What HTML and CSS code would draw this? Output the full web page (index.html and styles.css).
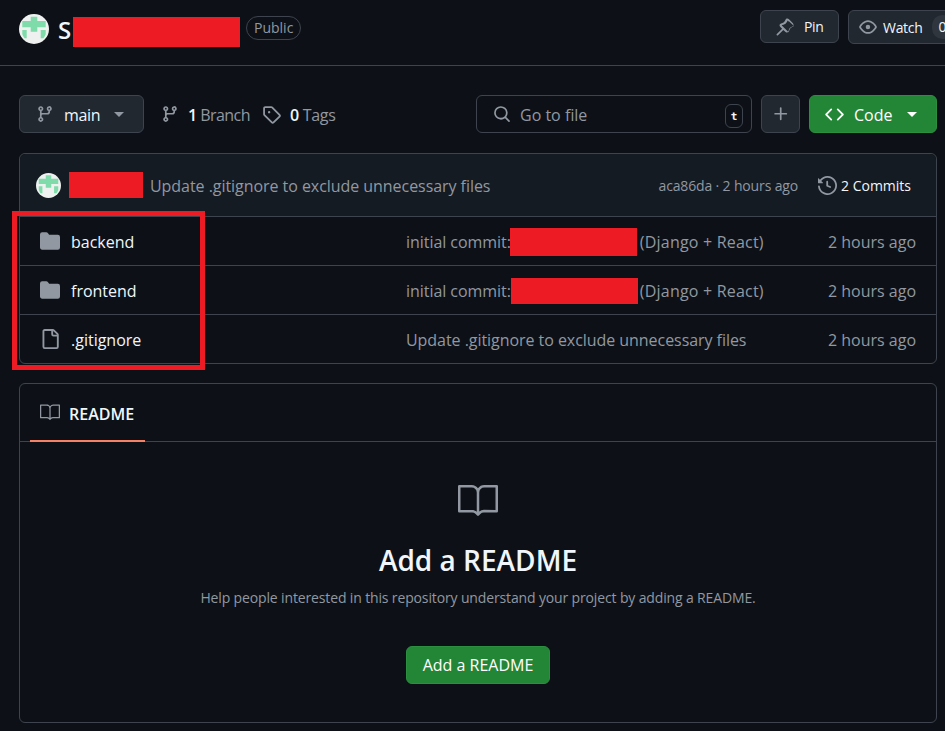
FILE: index.html
```html
<!DOCTYPE html>
<html lang="en">
<head>
<meta charset="utf-8">
<title>Repository</title>
<link rel="stylesheet" href="styles.css">
</head>
<body>
<svg width="0" height="0" class="defs">
  <defs>
    <symbol id="branch" viewBox="0 0 16 16"><path fill="currentColor" d="M9.5 3.25a2.25 2.25 0 1 1 3 2.122V6A2.5 2.5 0 0 1 10 8.5H6a1 1 0 0 0-1 1v1.128a2.251 2.251 0 1 1-1.5 0V5.372a2.25 2.25 0 1 1 1.5 0v1.836A2.493 2.493 0 0 1 6 7h4a1 1 0 0 0 1-1v-.628A2.25 2.25 0 0 1 9.5 3.25Zm-6 0a.75.75 0 1 0 1.5 0 .75.75 0 0 0-1.5 0Zm8.25-.75a.75.75 0 1 0 0 1.5.75.75 0 0 0 0-1.5ZM4.25 12a.75.75 0 1 0 0 1.5.75.75 0 0 0 0-1.5Z"/></symbol>
    <symbol id="book" viewBox="0 0 24 24"><path fill="currentColor" d="M0 3.75A.75.75 0 0 1 .75 3h7.497c1.566 0 2.945.8 3.751 2.014A4.495 4.495 0 0 1 15.750 3h7.500a.75.75 0 0 1 .75.75v15.063a.752.752 0 0 1-.755.75l-7.682-.052a3 3 0 0 0-2.142.878l-.89.891a.75.75 0 0 1-1.061 0l-.902-.901a2.996 2.996 0 0 0-2.121-.879H.75a.75.75 0 0 1-.75-.75Zm12.750 15.144a4.496 4.496 0 0 1 2.823-.971l6.927.047V4.500h-6.750a3 3 0 0 0-3 3ZM11.247 7.497a3 3 0 0 0-3-2.997H1.500V18h6.947c1.018 0 2.006.346 2.803.98Z"/></symbol>
    <symbol id="folder" viewBox="0 0 16 16"><path fill="currentColor" d="M1.75 1A1.75 1.75 0 0 0 0 2.75v10.5C0 14.216.784 15 1.75 15h12.500A1.75 1.75 0 0 0 16 13.250v-8.500A1.75 1.75 0 0 0 14.250 3H7.500a.25.25 0 0 1-.2-.1l-.9-1.200C6.070 1.260 5.550 1 5 1H1.750Z"/></symbol>
    <symbol id="file" viewBox="0 0 16 16"><path fill="currentColor" d="M2 1.75C2 .784 2.784 0 3.75 0h6.586c.464 0 .909.184 1.237.513l2.914 2.914c.329.328.513.773.513 1.237v9.586A1.75 1.75 0 0 1 13.250 16h-9.500A1.75 1.75 0 0 1 2 14.250Zm1.750-.25a.25.25 0 0 0-.25.25v12.500c0 .138.112.25.25.25h9.500a.25.25 0 0 0 .25-.25V6h-2.750A1.750 1.750 0 0 1 9 4.250V1.500Zm6.750.062V4.250c0 .138.112.25.25.25h2.688l-.011-.013-2.914-2.914-.013-.011Z"/></symbol>
    <symbol id="avatar" viewBox="0 0 30 30"><circle cx="15" cy="15" r="15" fill="#eef1ef"/><path fill="#7fdcaa" d="M11.700 2.700h6.600V7h8.400v6.300h-8.400v4.400h-6.600v-4.400H3.300V7h8.400Z"/><path fill="#7fdcaa" d="M3.300 16h4.400v8.300H5.500a14 14 0 0 1-2.200-4ZM21.700 16h5v4.300a14 14 0 0 1-2.200 4h-2.800Z"/></symbol>
  </defs>
</svg>

<header class="repo-head">
  <svg class="avatar-lg"><use href="#avatar"/></svg>
  <h1 class="repo-name">S<span class="redact redact-title"></span></h1>
  <span class="badge">Public</span>
  <div class="head-actions">
    <button class="btn btn-pin">
      <svg class="ic" viewBox="0 0 16 16"><path fill="currentColor" d="m11.294.984 3.722 3.722a1.75 1.75 0 0 1-.504 2.826l-1.327.613a3.089 3.089 0 0 0-1.707 2.084l-.302 1.289a1.75 1.750 0 0 1-2.945.813L6.5 10.56l-4.72 4.72a.749.749 0 1 1-1.060-1.060l4.720-4.720-1.772-1.771a1.750 1.750 0 0 1 .813-2.945l1.288-.302a3.089 3.089 0 0 0 2.084-1.707l.613-1.327a1.750 1.750 0 0 1 2.828-.504ZM10.335 2.120 9.722 3.447a4.587 4.587 0 0 1-3.095 2.537l-1.288.302a.25.25 0 0 0-.116.42l5.790 5.790a.25.25 0 0 0 .42-.116l.302-1.288a4.587 4.587 0 0 1 2.537-3.095l1.327-.613a.25.25 0 0 0 .072-.404l-3.722-3.722a.25.25 0 0 0-.404.072Z"/></svg>
      <span>Pin</span>
    </button>
    <button class="btn btn-watch">
      <svg class="ic" viewBox="0 0 16 16"><path fill="currentColor" d="M8 2c1.981 0 3.671.992 4.933 2.078 1.270 1.091 2.187 2.345 2.637 3.023a1.620 1.620 0 0 1 0 1.798c-.45.678-1.367 1.932-2.637 3.023C11.670 13.008 9.981 14 8 14s-3.671-.992-4.933-2.078C1.797 10.830.880 9.576.430 8.898a1.620 1.620 0 0 1 0-1.798c.45-.677 1.367-1.931 2.637-3.022C4.330 2.992 6.019 2 8 2ZM1.679 7.932a.12.12 0 0 0 0 .136c.411.622 1.241 1.750 2.366 2.717C5.176 11.758 6.527 12.500 8 12.500s2.825-.742 3.955-1.715c1.124-.967 1.954-2.096 2.366-2.717a.12.12 0 0 0 0-.136c-.412-.621-1.242-1.750-2.366-2.717C10.824 4.242 9.473 3.500 8 3.500s-2.825.742-3.955 1.715c-1.124.967-1.954 2.096-2.366 2.717ZM8 10a2 2 0 1 1-.001-3.999A2 2 0 0 1 8 10Z"/></svg>
      <span>Watch</span>
      <span class="count">0</span>
    </button>
  </div>
</header>

<main class="page">
  <div class="toolbar">
    <button class="btn btn-branch">
      <svg class="ic muted"><use href="#branch"/></svg>
      <span class="branch-name">main</span>
      <span class="caret caret-muted"></span>
    </button>
    <a class="stat stat-branch"><svg class="ic muted"><use href="#branch"/></svg><span><b>1</b> Branch</span></a>
    <a class="stat stat-tags">
      <svg class="ic muted" viewBox="0 0 16 16"><path fill="currentColor" d="M1 7.775V2.750C1 1.784 1.784 1 2.750 1h5.025c.464 0 .91.184 1.238.513l6.250 6.250a1.750 1.750 0 0 1 0 2.474l-5.026 5.026a1.750 1.750 0 0 1-2.474 0l-6.250-6.250A1.752 1.752 0 0 1 1 7.775Zm1.500 0c0 .066.026.130.073.177l6.250 6.250a.25.25 0 0 0 .354 0l5.025-5.025a.25.25 0 0 0 0-.354l-6.250-6.250a.25.25 0 0 0-.177-.073H2.750a.25.25 0 0 0-.25.25ZM6 5a1 1 0 1 1 0 2 1 1 0 0 1 0-2Z"/></svg>
      <span><b>0</b> Tags</span>
    </a>
    <div class="spacer"></div>
    <div class="search">
      <svg class="ic muted" viewBox="0 0 16 16"><path fill="currentColor" d="M10.680 11.740a6 6 0 0 1-7.922-8.982 6 6 0 0 1 8.982 7.922l3.040 3.040a.749.749 0 1 1-1.060 1.060ZM11.500 7a4.499 4.499 0 1 0-8.997 0A4.499 4.499 0 0 0 11.500 7Z"/></svg>
      <span class="search-text">Go to file</span>
      <kbd class="key">t</kbd>
    </div>
    <button class="btn btn-plus">
      <svg class="ic muted" viewBox="0 0 16 16"><path fill="currentColor" d="M7.750 2a.75.75 0 0 1 .75.75V7h4.250a.75.75 0 0 1 0 1.500H8.500v4.250a.75.75 0 0 1-1.500 0V8.500H2.750a.75.75 0 0 1 0-1.500H7V2.750A.75.75 0 0 1 7.750 2Z"/></svg>
    </button>
    <button class="btn btn-code">
      <svg class="ic" viewBox="0 0 16 16"><path fill="currentColor" d="m11.280 3.220 4.250 4.250a.75.75 0 0 1 0 1.060l-4.250 4.250a.749.749 0 1 1-1.060-1.060L13.940 8l-3.720-3.720a.749.749 0 1 1 1.060-1.060Zm-6.560 0a.751.751 0 0 1 1.060 1.060L2.060 8l3.720 3.720a.749.749 0 1 1-1.060 1.060L.470 8.530a.75.75 0 0 1 0-1.060Z"/></svg>
      <span>Code</span>
      <span class="caret"></span>
    </button>
  </div>

  <section class="files">
    <div class="commit-row">
      <svg class="avatar-sm"><use href="#avatar"/></svg>
      <span class="redact redact-user"></span>
      <span class="commit-msg">Update .gitignore to exclude unnecessary files</span>
      <span class="commit-meta">aca86da · 2 hours ago</span>
      <a class="commits">
        <svg class="ic muted" viewBox="0 0 16 16"><path fill="currentColor" d="m.427 1.927 1.215 1.215a8.002 8.002 0 1 1-1.600 5.685.75.75 0 1 1 1.493-.154 6.500 6.500 0 1 0 1.180-4.458l1.358 1.358A.25.25 0 0 1 3.896 6H.25A.25.25 0 0 1 0 5.750V2.104a.25.25 0 0 1 .427-.177ZM7.750 4a.75.75 0 0 1 .75.75v2.992l2.028.812a.75.75 0 0 1-.557 1.392l-2.500-1A.751.751 0 0 1 7 8.250v-3.500A.75.75 0 0 1 7.750 4Z"/></svg>
        <span>2 Commits</span>
      </a>
    </div>
    <div class="file-row">
      <svg class="ic muted file-ic"><use href="#folder"/></svg>
      <span class="file-name">backend</span>
      <span class="file-msg">initial commit:<span class="redact redact-a"></span><span class="msg-tail">(Django + React)</span></span>
      <span class="file-age">2 hours ago</span>
    </div>
    <div class="file-row">
      <svg class="ic muted file-ic"><use href="#folder"/></svg>
      <span class="file-name">frontend</span>
      <span class="file-msg">initial commit:<span class="redact redact-b"></span><span class="msg-tail">(Django + React)</span></span>
      <span class="file-age">2 hours ago</span>
    </div>
    <div class="file-row">
      <svg class="ic muted file-ic"><use href="#file"/></svg>
      <span class="file-name">.gitignore</span>
      <span class="file-msg">Update .gitignore to exclude unnecessary files</span>
      <span class="file-age">2 hours ago</span>
    </div>
  </section>

  <section class="readme">
    <div class="readme-tabs">
      <div class="readme-tab">
        <svg class="ic muted"><use href="#book"/></svg>
        <span>README</span>
      </div>
    </div>
    <div class="readme-body">
      <svg class="big-book muted"><use href="#book"/></svg>
      <h2 class="readme-title">Add a README</h2>
      <p class="readme-help">Help people interested in this repository understand your project by adding a README.</p>
      <button class="btn btn-add">Add a README</button>
    </div>
  </section>
</main>

<div class="highlight"></div>
</body>
</html>
```

FILE: styles.css
```css
* { box-sizing: border-box; }
html, body { margin: 0; height: 731px; overflow: hidden; }
body {
  position: relative;
  width: 945px;
  background: #0d1117;
  color: #f0f6fc;
  font-family: "Open Sans", "Noto Sans", sans-serif;
  font-size: 16px;
}
.defs { position: absolute; }
button { font: inherit; color: inherit; cursor: pointer; }
.ic { width: 18px; height: 18px; flex: none; display: block; }
.muted { color: #9198a1; }
.redact { display: inline-block; background: #ed1c24; flex: none; }

.btn {
  display: flex;
  align-items: center;
  margin: 0;
  padding: 0;
  background: #212830;
  border: 1px solid #3d444d;
  border-radius: 6px;
  white-space: nowrap;
}

.repo-head {
  display: flex;
  align-items: center;
  height: 66px;
  padding: 0 0 7px 19px;
  border-bottom: 1px solid #3d444d;
  white-space: nowrap;
}
.avatar-lg { width: 30px; height: 30px; flex: none; }
.repo-name {
  display: flex;
  align-items: flex-start;
  margin: 4px 0 0 9px;
  font-size: 24px;
  font-weight: 600;
  line-height: 30px;
}
.redact-title { width: 167px; height: 30px; margin: 2px 0 0 2px; }
.badge {
  margin: -2px 0 0 6px;
  width: 55px;
  height: 24px;
  border: 1px solid #3d444d;
  border-radius: 12px;
  color: #9198a1;
  font-size: 14px;
  line-height: 22px;
  text-align: center;
}
.head-actions { display: flex; align-self: flex-start; gap: 9px; margin: 10px -60px 0 auto; }
.btn-pin { width: 79px; height: 33px; padding-left: 15px; gap: 10px; font-size: 14px; letter-spacing: -.3px; }
.btn-pin .ic { color: #9198a1; }
.btn-watch { width: 157px; height: 34px; padding-left: 10px; gap: 6px; font-size: 14px; letter-spacing: -.3px; }
.btn-watch .ic { color: #9198a1; }
.count {
  margin-left: 3px;
  padding: 0 7px;
  height: 24px;
  line-height: 24px;
  border-radius: 12px;
  background: #2f363e;
}

.page { padding: 29px 8px 0 19px; }
.toolbar { display: flex; align-items: center; height: 38px; }
.spacer { flex: 1; }
.btn-branch { width: 125px; height: 38px; padding-left: 16px; color: #f0f6fc; }
.branch-name { margin-left: 10px; padding-top: 1px; font-weight: 500; letter-spacing: -.3px; }
.caret {
  width: 0;
  height: 0;
  border-left: 5px solid transparent;
  border-right: 5px solid transparent;
  border-top: 5px solid #f0f6fc;
}
.caret-muted { border-top-color: #9198a1; margin-left: 14px; }
.stat { display: flex; align-items: center; gap: 9px; color: #9198a1; white-space: nowrap; letter-spacing: -.3px; }
.stat span { padding-top: 1px; }
.stat b { color: #f0f6fc; font-weight: 600; }
.stat-branch { margin-left: 17px; letter-spacing: -.55px; }
.stat-tags { margin-left: 12px; gap: 9px; }
.stat-tags .ic { width: 19px; height: 19px; }
.search {
  display: flex;
  align-items: center;
  width: 276px;
  height: 38px;
  padding: 0 8px 0 16px;
  border: 1px solid #3d444d;
  border-radius: 6px;
  color: #9198a1;
}
.search-text { margin-left: 9px; padding-top: 1px; flex: 1; }
.key {
  width: 18px;
  height: 24px;
  margin-top: 4px;
  border: 1px solid #3d444d;
  border-radius: 6px;
  background: #0d1117;
  color: #f0f6fc;
  font-family: "DejaVu Sans Mono", monospace;
  font-size: 11px;
  font-weight: 700;
  line-height: 24px;
  text-align: center;
}
.btn-plus { justify-content: center; width: 39px; height: 38px; margin-left: 9px; }
.btn-code {
  width: 128px;
  height: 38px;
  margin-left: 9px;
  padding-left: 15px;
  background: #238636;
  border-color: #2c8f40;
  color: #fff;
}
.btn-code .ic { width: 19px; height: 19px; }
.btn-code span:first-of-type { margin-left: 10px; padding-top: 1px; font-weight: 500; }
.btn-code .caret { margin-left: 15px; border-top-color: #fff; }

.files { margin-top: 20px; height: 211px; border: 1px solid #3d444d; border-radius: 6px; }
.commit-row {
  display: flex;
  align-items: center;
  height: 63px;
  padding: 0 25px 0 16px;
  background: #151b23;
  border-bottom: 1px solid #3d444d;
  border-radius: 6px 6px 0 0;
  white-space: nowrap;
}
.avatar-sm { width: 25px; height: 25px; flex: none; }
.redact-user { width: 74px; height: 26px; margin-left: 8px; }
.commit-msg { margin-left: 7px; padding-top: 1px; color: #9198a1; letter-spacing: -.05px; }
.commit-meta { margin-left: auto; padding-top: 1px; color: #9198a1; font-size: 14px; letter-spacing: -.15px; }
.commits { display: flex; align-items: center; gap: 4px; margin-left: 20px; font-size: 14px; font-weight: 500; }
.commits .ic { width: 19px; height: 19px; }

.file-row {
  display: flex;
  align-items: center;
  height: 49px;
  padding: 1px 20px 0;
  border-bottom: 1px solid #3d444d;
  white-space: nowrap;
}
.file-row:last-child { border-bottom: 0; height: 48px; }
.file-ic { width: 20px; height: 20px; margin-top: -1px; }
.file-name { width: 335px; margin-left: 11px; color: #f0f6fc; }
.file-msg { display: flex; align-items: center; color: #9198a1; flex: 1; letter-spacing: -.05px; }
.msg-tail { letter-spacing: .2px; }
.file-age { color: #9198a1; }
.redact-a { width: 127px; height: 28px; margin: 0 3px 0 -1px; }
.redact-b { width: 127px; height: 26px; margin: 0 2px 0 0; }

.readme { margin-top: 19px; height: 340px; border: 1px solid #3d444d; border-radius: 6px; }
.readme-tabs { height: 58px; padding-left: 10px; border-bottom: 1px solid #3d444d; }
.readme-tab {
  display: flex;
  align-items: center;
  gap: 9px;
  width: 115px;
  height: 58px;
  padding: 0 0 0 10px;
  border-bottom: 2px solid #f78166;
  font-size: 16px;
  font-weight: 600;
}
.readme-tab span { padding-top: 3px; }
.readme-tab .ic { width: 20px; height: 20px; }
.readme-body { display: flex; flex-direction: column; align-items: center; padding-top: 38px; }
.big-book { width: 40px; height: 40px; display: block; }
.readme-title { margin: 20px 0 0; font-size: 28px; font-weight: 600; line-height: 40px; }
.readme-help { margin: 8px 0 0; color: #9198a1; font-size: 14px; line-height: 20px; letter-spacing: -.14px; }
.btn-add {
  justify-content: center;
  width: 144px;
  height: 38px;
  margin-top: 38px;
  background: #238636;
  border-color: #2c8f40;
  color: #fff;
  font-weight: 500;
}

.highlight {
  position: absolute;
  left: 12px;
  top: 211px;
  width: 193px;
  height: 159px;
  border: 5px solid #ed1c24;
}
```
